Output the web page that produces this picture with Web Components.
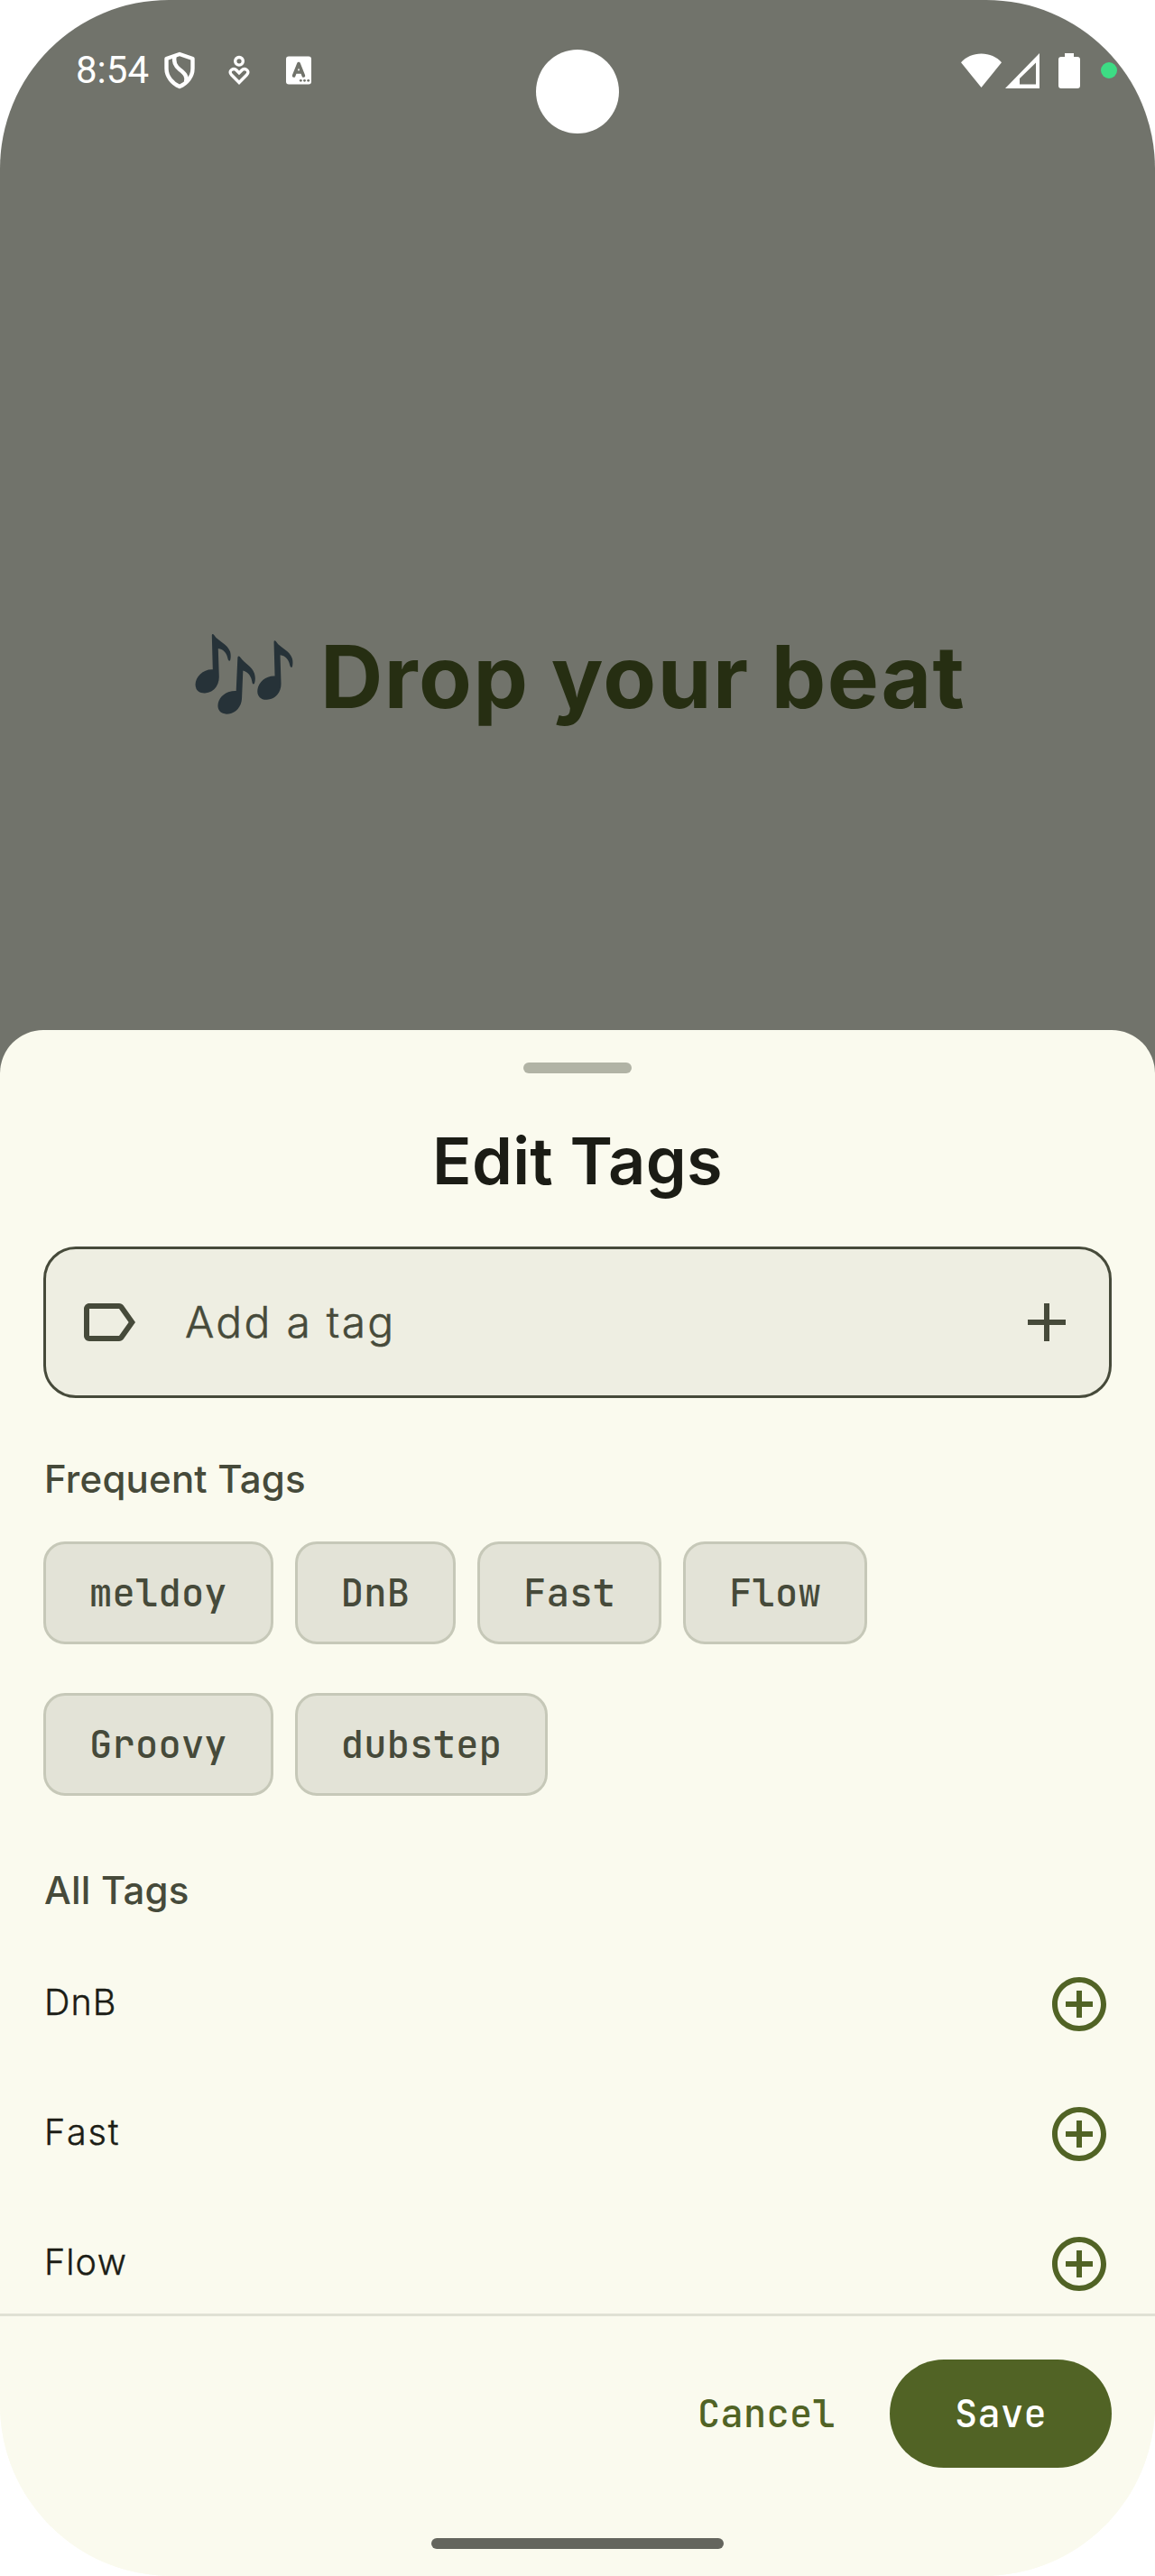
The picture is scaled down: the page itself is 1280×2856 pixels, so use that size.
<!DOCTYPE html>
<html lang="en">
<head>
<meta charset="utf-8">
<title>Edit Tags</title>
<style>
html,body{margin:0;padding:0;background:#fff}
body{width:1280px;height:2856px;overflow:hidden;font-family:Inter,"Noto Sans",sans-serif}
</style>
</head>
<body>
<phone-screen>
  <status-bar slot="top" time="8:54"></status-bar>
  <hero-title slot="top">Drop your beat</hero-title>
  <bottom-sheet heading="Edit Tags">
    <tag-input placeholder="Add a tag"></tag-input>
    <section-label>Frequent Tags</section-label>
    <chip-group>
      <tag-chip>meldoy</tag-chip><tag-chip>DnB</tag-chip><tag-chip>Fast</tag-chip><tag-chip>Flow</tag-chip><tag-chip>Groovy</tag-chip><tag-chip>dubstep</tag-chip>
    </chip-group>
    <section-label>All Tags</section-label>
    <tag-row>DnB</tag-row>
    <tag-row style="letter-spacing:1.8px">Fast</tag-row>
    <tag-row>Flow</tag-row>
    <action-button slot="actions" kind="text">Cancel</action-button>
    <action-button slot="actions" kind="filled">Save</action-button>
  </bottom-sheet>
</phone-screen>
<script>
const define = (name, render) => customElements.define(name, class extends HTMLElement {
  constructor() {
    super();
    this.attachShadow({ mode: 'open' }).innerHTML = render(this);
  }
});

define('phone-screen', () => `
<style>
:host{display:flex;flex-direction:column;width:1280px;height:2856px;overflow:hidden;background:linear-gradient(#71736b 1400px,#fafaee 1400px);border-radius:187px 187px 190px 190px}
.top{height:1142px;flex:none;display:flex;flex-direction:column}
</style>
<div class="top"><slot name="top"></slot></div><slot></slot>`);

define('status-bar', el => `
<style>
:host{display:block;position:relative;height:156px;flex:none;color:#fff}
.bar{display:flex;align-items:center;height:156px;padding:0 42px 0 84px;box-sizing:border-box}
.time{font:400 42px/48px Roboto,sans-serif;width:98px}
svg{display:block;flex:none;overflow:visible}
.grow{flex:1}
.camera{position:absolute;left:594px;top:55px;width:92px;height:93px;border-radius:50%;background:#fff}
.dot{width:18px;height:18px;border-radius:50%;background:#3ddc84}
</style>
<div class="bar">
<span class="time">${el.getAttribute('time')}</span>
<svg width="34" height="40" viewBox="0 0 34 40" fill="none" stroke="#fff" stroke-width="4.400" stroke-linejoin="round"><path d="M17 2 L31.500 7 V18 C31.500 27 25 34.500 17 38 C9 34.500 2.500 27 2.500 18 V7 Z"/><path d="M11.500 4.500 C10 11 12 15 17 19 C22 23 26 26 24 33"/></svg>
<svg style="margin-left:37px" width="24" height="32" viewBox="0 0 24 32" fill="none" stroke="#fff" stroke-width="3.400"><circle cx="12" cy="5.800" r="4.300"/><path d="M12 29.500 L3.800 21.300 C1.400 18.900 1.800 16.800 3.500 15.500 C5.500 14 7.800 14.500 9.200 16 L12 18.900 L14.800 16 C16.200 14.500 18.500 14 20.500 15.500 C22.200 16.800 22.600 18.900 20.200 21.300 Z"/></svg>
<svg style="margin-left:40px" width="28" height="32" viewBox="0 0 28 32"><rect y=".5" width="28" height="31" rx="3" fill="#fff"/><path d="M8.600 22 L14 8.500 L19.400 22 M10.600 18 H17.400" fill="none" stroke="#71736b" stroke-width="3.600" stroke-linecap="round" stroke-linejoin="round"/><g fill="#71736b"><circle cx="16.300" cy="27.300" r="1.400"/><circle cx="20.500" cy="27.300" r="1.400"/><circle cx="24.700" cy="27.300" r="1.400"/></g></svg>
<span class="grow"></span>
<svg width="45" height="39" viewBox="0 0 45 39" fill="#fff"><path d="M22.500 38 L0 10.300 C5.500 4 13.500 .5 22.500 .5 C31.500 .5 39.500 4 45 10.300 Z"/></svg>
<svg style="margin-left:4px" width="38" height="39" viewBox="0 0 38 39" fill="#fff"><path fill-rule="evenodd" d="M0 39 L38 0 V39 Z M16 34.500 H34 V10.500 L16 28 Z"/></svg>
<svg style="margin-left:21px" width="24" height="39" viewBox="0 0 24 39" fill="#fff"><path d="M7 0 H17 V4 H21 Q24 4 24 7 V36 Q24 39 21 39 H3 Q0 39 0 36 V7 Q0 4 3 4 H7 Z"/></svg>
<span class="dot" style="margin-left:23px"></span>
</div><div class="camera"></div>`);

define('hero-title', () => `
<style>
:host{display:flex;align-items:center;height:120px;margin-top:534px;padding-left:216px;color:#262e12;font-size:96px;line-height:120px;font-weight:700;letter-spacing:1.500px;white-space:nowrap}
svg{flex:none;margin:0 30px 5px 0}
</style>
<svg width="109" height="89" viewBox="79 99 327 268" fill="#263238"><path d="M138 99 Q141 99 144 104 C155 122 188 132 196 158 C199 168 198 180 196 187 Q192 191 189 184 C186 165 175 149 156 147 L159 240 C160 270 142 294 112 296 C92 297 80 285 80 268 C80 240 107 215 138 217 L135 103 Q135 99 138 99Z"/><path d="M138 99 Q141 99 144 104 C155 122 188 132 196 158 C199 168 198 180 196 187 Q192 191 189 184 C186 165 175 149 156 147 L159 240 C160 270 142 294 112 296 C92 297 80 285 80 268 C80 240 107 215 138 217 L135 103 Q135 99 138 99Z" transform="translate(207 22)"/><path d="M225 173 Q228 173 231 178 C242 194 270 208 277 231 C281 244 280 256 277 264 Q273 269 270 262 C267 240 256 225 239 221 L235 315 C233 345 211 366 184 366 C166 366 155 354 155 338 C156 309 184 287 216 289 L221 177 Q222 173 225 173Z"/></svg>
<span><slot></slot></span>`);

define('bottom-sheet', el => `
<style>
:host{display:flex;flex-direction:column;height:1714px;flex:none;box-sizing:border-box;background:#fafaee;border-radius:48px 48px 0 0}
.handle{width:120px;height:12px;border-radius:6px;background:#b1b3a5;margin:36px auto 0;flex:none}
h1{margin:53px 0 0;font-size:72px;line-height:88px;font-weight:600;letter-spacing:.3px;text-align:center;color:#1b1c15;flex:none}
.body{height:1237px;padding:51px 48px 0;box-sizing:border-box;flex:none;border-bottom:3px solid #e0e1d4;display:flex;flex-direction:column;overflow:hidden}
.actions{display:flex;justify-content:flex-end;gap:24px;padding:48px 48px 0;flex:none}
.nav{width:324px;height:12px;border-radius:6px;background:#64655d;margin:78px auto 0;flex:none}
</style>
<div class="handle"></div><h1>${el.getAttribute('heading')}</h1>
<div class="body"><slot></slot></div>
<div class="actions"><slot name="actions"></slot></div>
<div class="nav"></div>`);

define('tag-input', el => `
<style>
:host{display:flex;align-items:center;height:168px;flex:none;box-sizing:border-box;border:3px solid #464a3a;border-radius:36px;background:#eeeee2;padding:0 33px;color:#464a3a;fill:currentColor}
svg{flex:none;display:block}
span{flex:1;margin-left:49px;font-size:48px;line-height:72px;letter-spacing:2.250px;font-weight:300;-webkit-text-stroke:.5px #464a3a}
</style>
<svg width="72" height="72" viewBox="0 0 24 24"><path d="M17.630 5.840C17.270 5.330 16.670 5 16 5L5 5.010C3.900 5.010 3 5.900 3 7v10c0 1.100.9 1.990 2 1.990L16 19c.67 0 1.270-.33 1.630-.84L22 12l-4.370-6.160zM16 17H5V7h11l3.550 5L16 17z"/></svg>
<span>${el.getAttribute('placeholder')}</span>
<svg width="72" height="72" viewBox="0 0 24 24"><path d="M19 13h-6v6h-2v-6H5v-2h6V5h2v6h6v2z"/></svg>`);

define('section-label', () => `
<style>
:host{display:block;flex:none;margin-top:60px;padding-left:1px;height:60px;font-size:42px;line-height:60px;font-weight:500;letter-spacing:.2px;color:#464a3a}
</style><slot></slot>`);

define('chip-group', () => `
<style>
:host{display:flex;flex-wrap:wrap;flex:none;gap:54px 24px;margin-top:39px;margin-bottom:15px;padding-right:200px}
</style><slot></slot>`);

define('tag-chip', () => `
<style>
:host{display:flex;align-items:center;height:114px;box-sizing:border-box;padding:0 48px;border:3px solid #c6c8b8;border-radius:24px;background:#e3e3d7;color:#464a3a;font:500 42px/60px "JetBrains Mono","DejaVu Sans Mono",monospace;letter-spacing:.27px}
</style><slot></slot>`);

define('tag-row', () => `
<style>
:host{display:flex;align-items:center;justify-content:space-between;flex:none;height:144px;position:relative;top:24px;color:#1b1c15;font-size:39.500px;line-height:60px;font-weight:300;letter-spacing:1px;font-kerning:none;-webkit-text-stroke:.4px #1b1c15}
span{padding:0 0 5px 1px}
svg{display:block}
</style><span><slot></slot></span>
<svg width="72" height="72" viewBox="0 0 24 24" fill="#516325" style="-webkit-text-stroke:0"><path d="M13 7h-2v4H7v2h4v4h2v-4h4v-2h-4V7zm-1-5C6.480 2 2 6.480 2 12s4.480 10 10 10 10-4.480 10-10S17.520 2 12 2zm0 18c-4.410 0-8-3.590-8-8s3.590-8 8-8 8 3.590 8 8-3.590 8-8 8z"/></svg>`);

define('action-button', () => `
<style>
:host{display:flex;align-items:center;height:120px;border-radius:60px;padding:0 36px;color:#516325;font:500 42px/60px "JetBrains Mono","DejaVu Sans Mono",monospace;letter-spacing:.3px}
:host([kind=filled]){background:#516325;color:#fff;padding:0 72px}
</style><slot></slot>`);
</script>
</body>
</html>
